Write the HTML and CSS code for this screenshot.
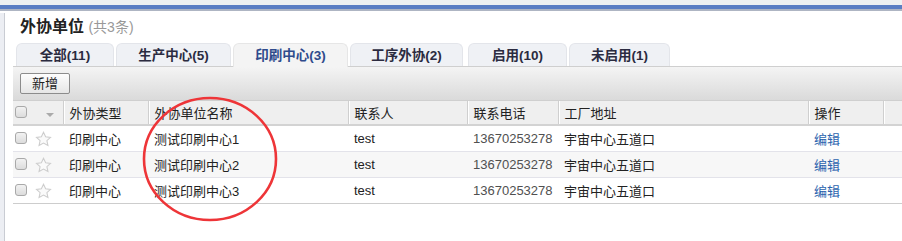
FILE: index.html
```html
<!DOCTYPE html>
<html lang="zh">
<head>
<meta charset="utf-8">
<link rel="stylesheet" href="styles.css">
</head>
<body>
<div class="topbar"><div class="ticks"></div><div class="blue"></div><div class="gray"></div></div>
<div class="page">
  <div class="side"></div>
  <div class="main">
    <h1 class="title">外协单位 <span class="count">(共3条)</span></h1>
    <div class="tabs">
      <div class="tab w1">全部(11)</div>
      <div class="tab w2">生产中心(5)</div>
      <div class="tab w3 active">印刷中心(3)</div>
      <div class="tab w4">工序外协(2)</div>
      <div class="tab w5">启用(10)</div>
      <div class="tab w6">未启用(1)</div>
    </div>
    <div class="toolbar"><button class="btn">新增</button></div>
    <table class="grid">
      <colgroup>
        <col class="c0"><col class="c1"><col class="c2"><col class="c3"><col class="c4"><col class="c5"><col class="c6"><col class="c7"><col class="c8">
      </colgroup>
      <thead>
        <tr>
          <th class="nb"><span class="cb"></span></th>
          <th class="nb"><span class="caret"></span></th>
          <th>外协类型</th>
          <th>外协单位名称</th>
          <th>联系人</th>
          <th>联系电话</th>
          <th>工厂地址</th>
          <th>操作</th>
          <th></th>
        </tr>
      </thead>
      <tbody>
        <tr>
          <td><span class="cb"></span></td>
          <td class="st"><svg width="17" height="17" viewBox="0 0 16 16"><path d="M8 1.2l2 4.3 4.6.5-3.4 3.1 1 4.6L8 11.4l-4.2 2.3 1-4.6L1.4 6l4.6-.5z" fill="#fafafa" stroke="#cdcdcd" stroke-width="1"/></svg></td>
          <td>印刷中心</td><td>测试印刷中心1</td><td>test</td><td class="ph">13670253278</td><td>宇宙中心五道口</td><td><a class="lk">编辑</a></td><td></td>
        </tr>
        <tr class="alt">
          <td><span class="cb"></span></td>
          <td class="st"><svg width="17" height="17" viewBox="0 0 16 16"><path d="M8 1.2l2 4.3 4.6.5-3.4 3.1 1 4.6L8 11.4l-4.2 2.3 1-4.6L1.4 6l4.6-.5z" fill="#fafafa" stroke="#cdcdcd" stroke-width="1"/></svg></td>
          <td>印刷中心</td><td>测试印刷中心2</td><td>test</td><td class="ph">13670253278</td><td>宇宙中心五道口</td><td><a class="lk">编辑</a></td><td></td>
        </tr>
        <tr>
          <td><span class="cb"></span></td>
          <td class="st"><svg width="17" height="17" viewBox="0 0 16 16"><path d="M8 1.2l2 4.3 4.6.5-3.4 3.1 1 4.6L8 11.4l-4.2 2.3 1-4.6L1.4 6l4.6-.5z" fill="#fafafa" stroke="#cdcdcd" stroke-width="1"/></svg></td>
          <td>印刷中心</td><td>测试印刷中心3</td><td>test</td><td class="ph">13670253278</td><td>宇宙中心五道口</td><td><a class="lk">编辑</a></td><td></td>
        </tr>
      </tbody>
    </table>
  </div>
</div>
<svg class="ring" width="902" height="241" viewBox="0 0 902 241"><ellipse cx="210" cy="159" rx="66" ry="61" fill="none" stroke="#ee3538" stroke-width="2.6"/></svg>
</body>
</html>
```
FILE: styles.css
```css
html, body { margin: 0; padding: 0; background: #fff; }
body { font-family: "Liberation Sans", "Noto Sans CJK SC", sans-serif; font-size: 13px; color: #222; width: 902px; height: 241px; overflow: hidden; position: relative; }
.topbar .ticks { height: 5px; background: #eff1f1; }
.topbar .blue { height: 4px; background: #5b7ec3; }
.topbar .gray { height: 2px; background: #aeb5c3; }
.page { display: flex; height: 230px; }
.side { width: 4px; background: #eceef3; border-right: 1px solid #c9ccd3; margin-top: 2px; }
.main { flex: 1; padding-left: 8px; min-width: 0; }
.title { margin: 0; padding: 5px 0 0 7px; height: 27px; font-size: 16px; font-weight: bold; color: #222; line-height: 22px; }
.count { font-weight: normal; font-size: 14px; color: #999; }
.tabs { display: flex; height: 23px; padding-left: 3px; }
.tab { height: 23px; margin-right: 2px; background: #eff1f5; border: 1px solid #e3e5ea; border-bottom: none; border-radius: 6px 6px 0 0; box-sizing: border-box; text-align: center; font-weight: bold; font-size: 13.5px; line-height: 24px; color: #2b2b40; }
.tab.w1 { width: 98px; }
.tab.w2 { width: 115px; }
.tab.w3 { width: 115px; }
.tab.w4 { width: 113px; margin-right: 5px; }
.tab.w5 { width: 99px; }
.tab.w6 { width: 101px; }
.tab.active { background: #f4f4f4; border-color: #e6e6e6; color: #2f4b8c; height: 24px; position: relative; z-index: 1; }
.toolbar { height: 34px; border-top: 1px solid #cfcfcf; background: linear-gradient(#f4f4f4, #dadada); box-sizing: border-box; padding: 6px 0 0 7px; }
.btn { width: 50px; height: 21px; padding: 0; border: 1px solid #8c8c8c; border-radius: 2px; background: linear-gradient(#fdfdfd, #e6e6e6); font-family: inherit; font-size: 13px; color: #222; line-height: 18px; }
.grid { width: 889px; border-collapse: collapse; table-layout: fixed; border-top: 1px solid #cfcfcf; border-bottom: 1px solid #cdcdcd; }
.c0 { width: 17px; } .c1 { width: 33px; } .c2 { width: 85px; } .c3 { width: 200px; } .c4 { width: 119px; } .c5 { width: 91px; } .c6 { width: 250px; } .c7 { width: 75px; } .c8 { width: 19px; }
th { height: 23px; background: #efefef; font-weight: normal; text-align: left; padding: 0 0 0 6px; border-left: 1px solid #cfcfcf; box-shadow: inset 1px 0 0 #fff; border-bottom: 2px solid #d3d3d3; color: #222; }
th.nb { border-left: none; box-shadow: none; }
th:first-child, td:first-child { padding-left: 2px; }
td { height: 25px; padding: 0 0 0 6px; border-bottom: 1px solid #e3e3ea; white-space: nowrap; overflow: hidden; }
tr:last-child td { border-bottom: none; }
tr.alt td { background: #f7f7f7; }
td.st { padding-left: 5px; }
td.st svg { display: block; margin-top: 2px; }
.cb { display: block; width: 10px; height: 10px; border: 1px solid #a9a9a9; border-radius: 3px; background: linear-gradient(#f2f2f2, #dcdcdc); margin-top: -2px; }
.caret { display: block; margin: 5px 0 0 10px; width: 0; height: 0; border-left: 4px solid transparent; border-right: 4px solid transparent; border-top: 4px solid #aaa; }
.ph { color: #505050; font-size: 13px; }
.lk { color: #2b63ae; }
.ring { position: absolute; left: 0; top: 0; pointer-events: none; }
```
